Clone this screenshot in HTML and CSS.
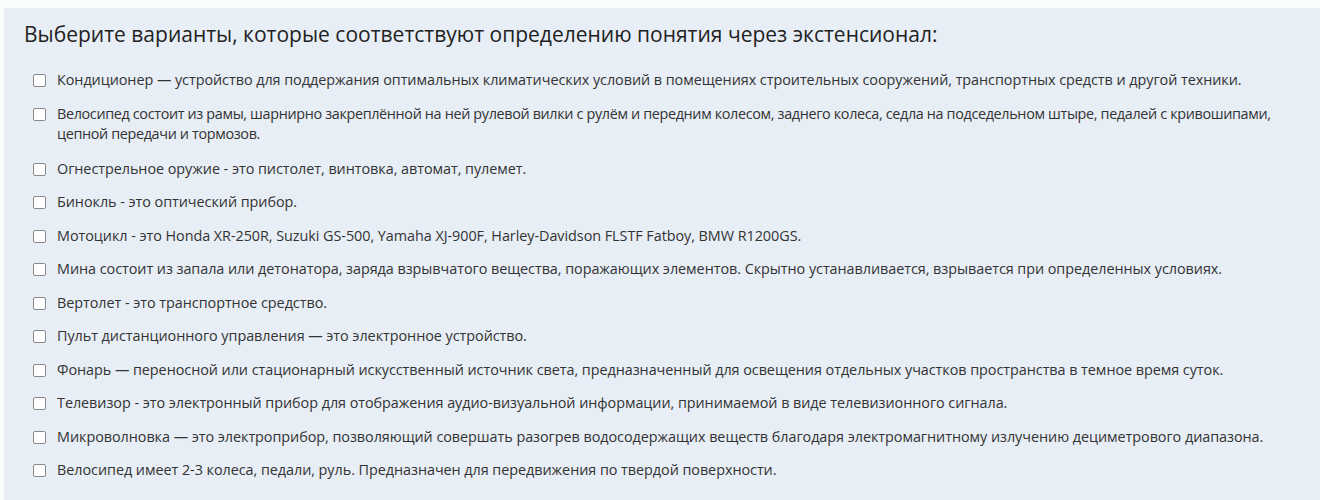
FILE: index.html
```html
<!DOCTYPE html>
<html lang="ru">
<head>
<meta charset="utf-8">
<link rel="stylesheet" href="styles.css">
</head>
<body>
<div class="panel">
  <h2 class="title">Выберите варианты, которые соответствуют определению понятия через экстенсионал:</h2>
  <ul class="options">
    <li class="option"><span class="box"></span><span class="text">Кондиционер — устройство для поддержания оптимальных климатических условий в помещениях строительных сооружений, транспортных средств и другой техники.</span></li>
    <li class="option option-long"><span class="box"></span><span class="text">Велосипед состоит из рамы, шарнирно закреплённой на ней рулевой вилки с рулём и передним колесом, заднего колеса, седла на подседельном штыре, педалей с кривошипами, цепной передачи и тормозов.</span></li>
    <li class="option"><span class="box"></span><span class="text">Огнестрельное оружие - это пистолет, винтовка, автомат, пулемет.</span></li>
    <li class="option"><span class="box"></span><span class="text">Бинокль - это оптический прибор.</span></li>
    <li class="option"><span class="box"></span><span class="text">Мотоцикл - это Honda XR-250R, Suzuki GS-500, Yamaha XJ-900F, Harley-Davidson FLSTF Fatboy, BMW R1200GS.</span></li>
    <li class="option"><span class="box"></span><span class="text">Мина состоит из запала или детонатора, заряда взрывчатого вещества, поражающих элементов. Скрытно устанавливается, взрывается при определенных условиях.</span></li>
    <li class="option"><span class="box"></span><span class="text">Вертолет - это транспортное средство.</span></li>
    <li class="option"><span class="box"></span><span class="text">Пульт дистанционного управления — это электронное устройство.</span></li>
    <li class="option"><span class="box"></span><span class="text">Фонарь — переносной или стационарный искусственный источник света, предназначенный для освещения отдельных участков пространства в темное время суток.</span></li>
    <li class="option"><span class="box"></span><span class="text">Телевизор - это электронный прибор для отображения аудио-визуальной информации, принимаемой в виде телевизионного сигнала.</span></li>
    <li class="option"><span class="box"></span><span class="text">Микроволновка — это электроприбор, позволяющий совершать разогрев водосодержащих веществ благодаря электромагнитному излучению дециметрового диапазона.</span></li>
    <li class="option"><span class="box"></span><span class="text">Велосипед имеет 2-3 колеса, педали, руль. Предназначен для передвижения по твердой поверхности.</span></li>
  </ul>
</div>
</body>
</html>
```

FILE: styles.css
```css
html, body {
  margin: 0;
  padding: 0;
  background: #f8fcfb;
  height: 100%;
}
body {
  padding: 8px 0 0 4px;
  box-sizing: border-box;
  font-family: "Open Sans", "Noto Sans", sans-serif;
  color: #333;
}
.panel {
  background: #e8eef6;
  min-height: 492px;
  padding: 12px 8px 0 20px;
  box-sizing: border-box;
}
.title {
  margin: 0 0 22px 0;
  font-size: 21px;
  font-weight: 400;
  color: #222;
  line-height: 28px;
}
.options {
  list-style: none;
  margin: 0;
  padding: 0 0 0 9px;
}
.option {
  display: flex;
  align-items: flex-start;
  font-size: 14.4px;
  line-height: 20px;
  margin-bottom: 13.5px;
}
.option-long {
  margin-bottom: 15px;
}
.option-long .text {
  letter-spacing: -0.35px;
}
.box {
  flex: none;
  width: 11px;
  height: 11px;
  border: 1px solid #8a8a8a;
  border-radius: 2px;
  background: #fff;
  margin: 4px 11px 0 0;
}
.text {
  flex: 1;
  letter-spacing: -0.05px;
}
```
